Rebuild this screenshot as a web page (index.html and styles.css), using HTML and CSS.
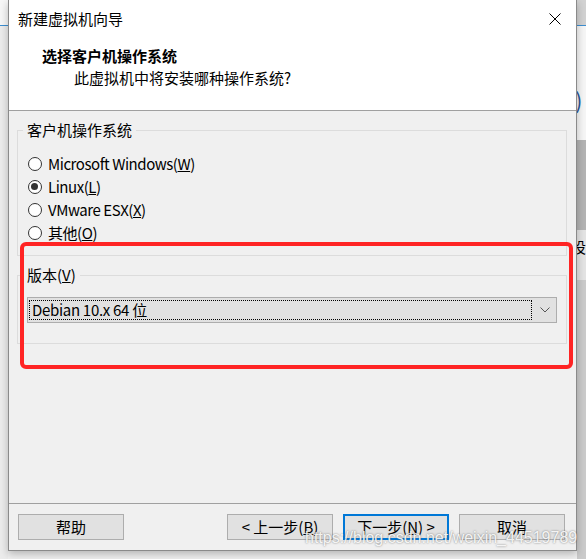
FILE: index.html
```html
<!DOCTYPE html>
<html lang="zh-CN">

<head>
    <meta charset="UTF-8">
    <meta name="viewport" content="width=device-width, initial-scale=1.0">
    <title>新建虚拟机向导</title>
    <link rel="stylesheet" href="styles.css">
</head>

<body>
    <div class="screen">
        <div class="side side-left">
            <div class="side-top"></div>
        </div>

        <div class="dialog">
            <div class="dialog-head">
                <div class="titlebar">
                    <span class="title">新建虚拟机向导</span>
                    <svg class="close" width="12" height="12" viewBox="0 0 12 12">
                        <path d="M0.5 0.5 L11.5 11.5 M11.5 0.5 L0.5 11.5" stroke="#000" stroke-width="1" fill="none"/>
                    </svg>
                </div>
                <div class="step-title">选择客户机操作系统</div>
                <div class="step-desc">此虚拟机中将安装哪种操作系统?</div>
            </div>

            <div class="dialog-body">
                <fieldset class="group os-group">
                    <legend>客户机操作系统</legend>
                    <div class="radio"><span class="radio-dot"></span>Microsoft Windows(<u>W</u>)</div>
                    <div class="radio checked"><span class="radio-dot"></span>Linux(<u>L</u>)</div>
                    <div class="radio"><span class="radio-dot"></span>VMware ESX(<u>X</u>)</div>
                    <div class="radio"><span class="radio-dot"></span>其他(<u>O</u>)</div>
                </fieldset>

                <fieldset class="group version-group">
                    <legend>版本(<u>V</u>)</legend>
                    <div class="combo">
                        <div class="combo-value">Debian 10.x 64 位</div>
                        <div class="combo-arrow">
                            <svg width="10" height="6" viewBox="0 0 10 6">
                                <path d="M0.5 0.5 L5 5 L9.5 0.5" stroke="#555" stroke-width="1" fill="none"/>
                            </svg>
                        </div>
                    </div>
                </fieldset>
            </div>

            <div class="dialog-foot">
                <button class="btn">帮助</button>
                <div class="foot-right">
                    <button class="btn">&lt; 上一步(<u>B</u>)</button>
                    <button class="btn btn-default">下一步(<u>N</u>) &gt;</button>
                    <button class="btn">取消</button>
                </div>
            </div>

            <div class="mark-box"></div>
            <div class="watermark">https://blog.csdn.net/weixin_44519789</div>
        </div>

        <div class="side side-right">
            <div class="side-top"></div>
            <div class="side-light"><span class="side-glyph">)</span></div>
            <div class="side-dark"></div>
            <div class="side-light2"><span class="side-char">设</span></div>
            <div class="side-gray"></div>
        </div>
    </div>
</body>

</html>
```

FILE: styles.css
```css
* {
    box-sizing: border-box;
}

body {
    margin: 0;
    background-color: #f0f0f0;
    font-family: "Noto Sans CJK SC", "Noto Sans", sans-serif;
    font-size: 15px;
    color: #000;
}

.screen {
    display: flex;
    width: 586px;
    height: 559px;
    overflow: hidden;
}

.side {
    display: flex;
    flex-direction: column;
}

.side-left {
    width: 8px;
    background-color: #ececec;
}

.side-top {
    height: 26px;
    background-color: #f7f7f7;
    border-bottom: 1px solid #3d8fd1;
}

.side-right {
    width: 9px;
    background-color: #c9c9c9;
}

.side-right .side-top {
    background-color: #d2d2d2;
}

.side-light {
    height: 114px;
    background-color: #f6f6f6;
    overflow: hidden;
}

.side-glyph {
    display: block;
    margin: 62px 0 0 -2px;
    color: #2b5797;
    font-size: 22px;
    line-height: 22px;
}

.side-dark {
    height: 90px;
    background-color: #b4b4b4;
}

.side-light2 {
    height: 50px;
    background-color: #e4e4e4;
    overflow: hidden;
}

.side-char {
    display: block;
    margin: 6px 0 0 -6px;
    font-size: 15px;
}

.side-gray {
    flex: 1;
    background-color: #cbcbcb;
}

.dialog {
    position: relative;
    display: flex;
    flex-direction: column;
    width: 570px;
    height: 551px;
    background-color: #f0f0f0;
    border: 1px solid #8a8a8a;
    border-top: none;
    box-shadow: 0 3px 8px rgba(0, 0, 0, 0.25);
}

.dialog-head {
    height: 111px;
    background-color: #fff;
    border-bottom: 1px solid #a0a0a0;
}

.titlebar {
    display: flex;
    justify-content: space-between;
    align-items: center;
    height: 40px;
    padding: 0 15px 2px 9px;
}

.title {
    line-height: 20px;
}

.step-title {
    margin-top: 5px;
    padding-left: 33px;
    font-weight: bold;
    line-height: 22px;
}

.step-desc {
    padding-left: 65px;
    line-height: 22px;
}

.dialog-body {
    flex: 1;
    padding: 9px 9px 0 8px;
}

.group {
    margin: 0;
    padding: 0 9px;
    border: 1px solid #dcdcdc;
}

.group legend {
    margin-left: -4px;
    padding: 0 4px;
    line-height: 20px;
}

.os-group {
    padding-top: 12px;
    padding-bottom: 11px;
}

.version-group {
    margin-top: 9px;
    padding-top: 12px;
    padding-bottom: 20px;
}

.radio {
    display: flex;
    align-items: center;
    height: 23px;
    letter-spacing: -0.45px;
    white-space: nowrap;
}

.radio-dot {
    position: relative;
    width: 14px;
    height: 14px;
    margin: 0 6px 0 1px;
    border: 1px solid #333;
    border-radius: 50%;
    background-color: #fff;
}

.radio.checked .radio-dot::after {
    content: "";
    position: absolute;
    left: 2.5px;
    top: 2.5px;
    width: 7px;
    height: 7px;
    border-radius: 50%;
    background-color: #333;
}

.combo {
    display: flex;
    height: 26px;
    border: 1px solid #adadad;
    background-color: #e1e1e1;
}

.combo-value {
    flex: 1;
    margin: 2px 0 2px 1px;
    padding-left: 2px;
    border: 1px dotted #000;
    line-height: 18px;
    letter-spacing: -0.3px;
    white-space: nowrap;
}

.combo-arrow {
    display: flex;
    align-items: center;
    justify-content: center;
    width: 24px;
    padding-left: 2px;
}

.dialog-foot {
    display: flex;
    justify-content: space-between;
    height: 47px;
    padding: 10px 11px 10px 9px;
    border-top: 1px solid #a0a0a0;
}

.foot-right {
    display: flex;
    gap: 10px;
}

.btn {
    width: 106px;
    height: 26px;
    padding: 0;
    font-family: inherit;
    font-size: 15px;
    line-height: 22px;
    color: #000;
    background-color: #e1e1e1;
    border: 1px solid #adadad;
}

.btn-default {
    border: 2px solid #0078d7;
}

.mark-box {
    position: absolute;
    left: 11px;
    top: 242px;
    width: 553px;
    height: 127px;
    border: 4px solid #ff2424;
    border-radius: 6px;
}

.watermark {
    position: absolute;
    left: 296px;
    top: 529px;
    font-family: "Liberation Sans", Arial, sans-serif;
    font-size: 16px;
    line-height: 18px;
    color: rgba(255, 255, 255, 0.9);
    text-shadow: 0 0 2px rgba(80, 80, 80, 0.8);
    white-space: nowrap;
}
```
